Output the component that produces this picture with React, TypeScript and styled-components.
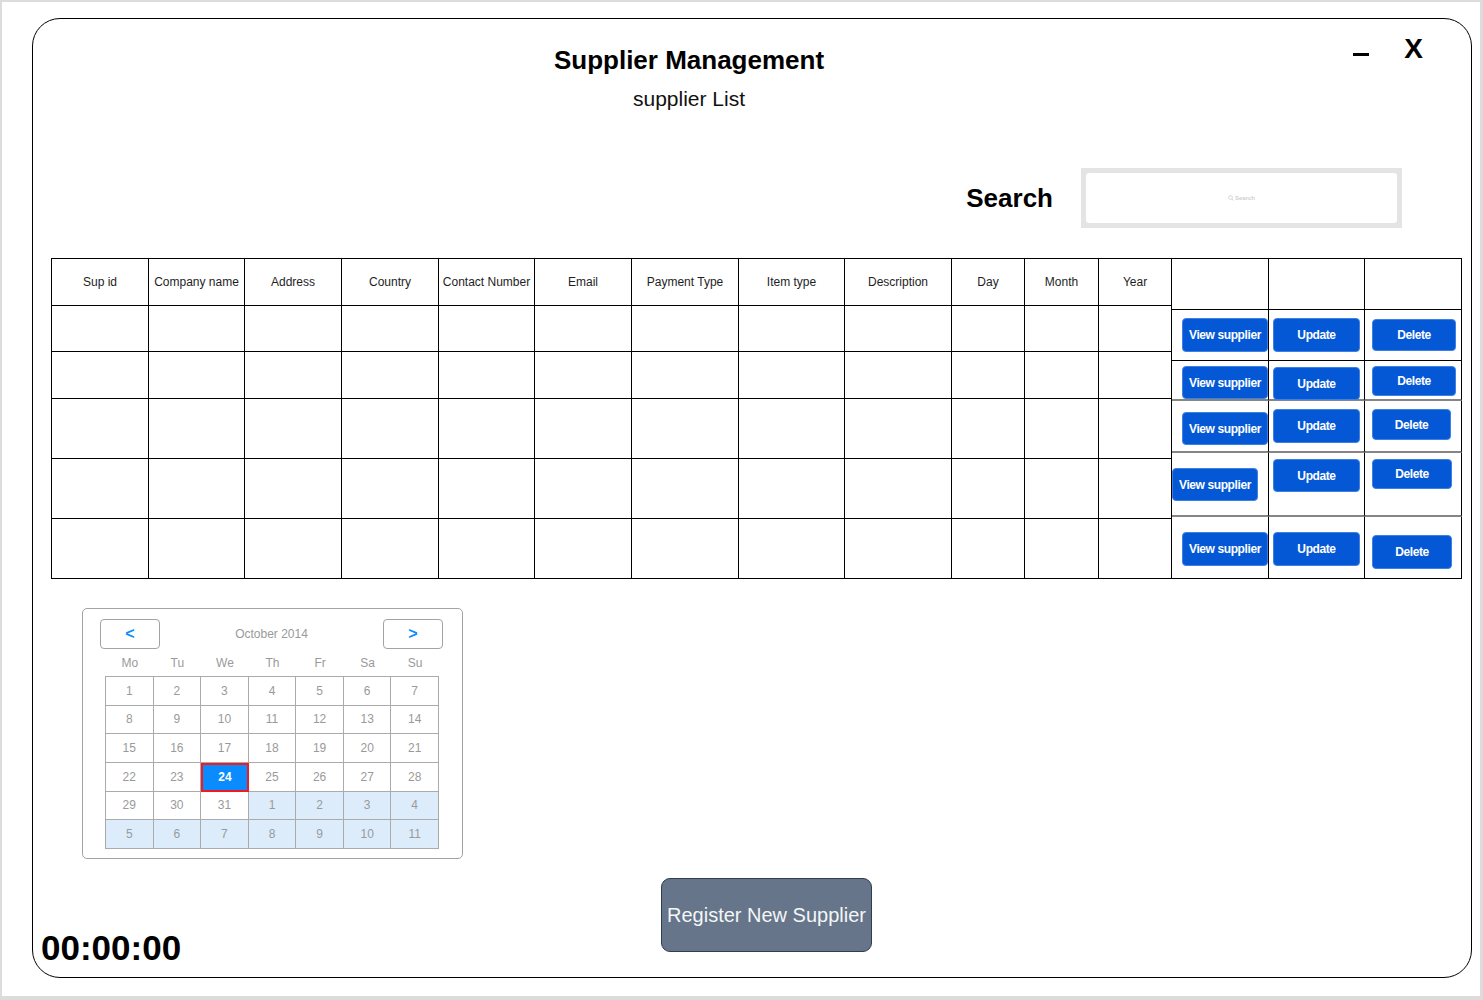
import React from 'react';
import styled, { createGlobalStyle, css } from 'styled-components';

const GlobalStyle = createGlobalStyle`
  html, body { margin: 0; padding: 0; background: #fff; }
  body { font-family: "Liberation Sans", Arial, sans-serif; }
  * { box-sizing: border-box; }
`;

const Page = styled.div`
  width: 1483px;
  height: 1000px;
  border-style: solid;
  border-color: #dcdcdc;
  border-width: 2px 3px 4px 2px;
  padding: 16px 0 0 30px;
  background: #fff;
`;

const Frame = styled.div`
  width: 1440px;
  height: 960px;
  border: 1px solid #000;
  border-radius: 28px;
  display: flex;
  flex-direction: column;
`;

const Header = styled.header`
  display: grid;
  grid-template-columns: 456px 400px 1fr;
  align-items: start;
`;

const TitleBlock = styled.div`
  grid-column: 2;
  display: flex;
  flex-direction: column;
  align-items: center;
  padding-top: 26px;
`;

const Title = styled.h1`
  margin: 0;
  font-size: 26px;
  font-weight: 700;
  line-height: normal;
  color: #000;
`;

const Subtitle = styled.p`
  margin: 11px 0 0;
  font-size: 21px;
  line-height: normal;
  color: #111;
`;

const WindowControls = styled.div`
  grid-column: 3;
  justify-self: end;
  display: flex;
  align-items: flex-start;
  gap: 35px;
  padding: 16px 48px 0 0;
`;

const MinimizeIcon = styled.span`
  display: block;
  width: 16px;
  height: 3px;
  margin-top: 18px;
  background: #000;
`;

const CloseGlyph = styled.span`
  font-size: 28px;
  font-weight: 700;
  line-height: 1;
  color: #000;
`;

const SearchRow = styled.div`
  display: flex;
  justify-content: flex-end;
  align-items: center;
  gap: 28px;
  margin-top: 57px;
  padding-right: 69px;
`;

const SearchLabel = styled.span`
  font-size: 26px;
  font-weight: 700;
  color: #000;
`;

const SearchField = styled.div`
  width: 321px;
  height: 60px;
  padding: 5px;
  background: #e4e4e4;
`;

const SearchInner = styled.div`
  height: 100%;
  border-radius: 3px;
  background: #fff;
  display: flex;
  align-items: center;
  justify-content: center;
  gap: 1px;
  font-size: 6px;
  font-weight: 700;
  color: #cfcfcf;
`;

const TableArea = styled.div`
  display: flex;
  margin: 30px 0 0 18px;
`;

const DataGrid = styled.div`
  display: grid;
  grid-template-columns: 97px 96px 97px 97px 96px 97px 107px 106px 107px 73px 74px 73px;
  grid-template-rows: 47px 46px 47px 60px 60px 60px;
  border-top: 1px solid #000;
  border-left: 1px solid #000;
`;

const HeadCell = styled.div`
  display: flex;
  align-items: center;
  justify-content: center;
  border-right: 1px solid #000;
  border-bottom: 1px solid #000;
  font-size: 12px;
  color: #1e1e1e;
  white-space: nowrap;
`;

const BodyCell = styled.div`
  border-right: 1px solid #000;
  border-bottom: 1px solid #000;
`;

const ActionGrid = styled.div`
  display: grid;
  grid-template-columns: 97px 96px 97px;
  grid-template-rows: 51px 51px 40px 52px 64px 62px;
  border-top: 1px solid #000;
`;

const ActionCell = styled.div<{ $gray?: boolean }>`
  display: flex;
  align-items: flex-start;
  border-right: 1px solid #000;
  border-bottom: ${p => (p.$gray ? '2px solid #858585' : '1px solid #000')};
`;

const ActionButton = styled.button<{ $mt: number; $ml: number; $w: number; $h: number }>`
  flex: none;
  margin-top: ${p => p.$mt}px;
  margin-left: ${p => p.$ml}px;
  width: ${p => p.$w}px;
  height: ${p => p.$h}px;
  padding: 0;
  border: 1px solid #3f80e3;
  border-radius: 4px;
  background: #0458d6;
  color: #fff;
  font-family: "Liberation Sans", Arial, sans-serif;
  font-size: 12px;
  font-weight: 700;
  letter-spacing: -0.4px;
  white-space: nowrap;
`;

const CalendarCard = styled.div`
  width: 381px;
  height: 251px;
  margin: 29px 0 0 49px;
  padding: 10px 19px 0 17px;
  border: 1px solid #a3a3a3;
  border-radius: 5px;
  display: flex;
  flex-direction: column;
`;

const CalNav = styled.div`
  display: flex;
  align-items: center;
  height: 30px;
`;

const NavButton = styled.button`
  width: 60px;
  height: 30px;
  padding: 0;
  border: 1px solid #a3a3a3;
  border-radius: 4px;
  background: #fff;
  color: #0a8cff;
  font-family: "Liberation Sans", Arial, sans-serif;
  font-size: 16px;
  font-weight: 700;
`;

const MonthLabel = styled.span`
  flex: 1;
  text-align: center;
  font-size: 12px;
  color: #9a9a9a;
`;

const WeekRow = styled.div`
  display: grid;
  grid-template-columns: repeat(7, 1fr);
  width: 334px;
  height: 20px;
  margin: 4px 0 0 5px;
  padding-left: 1px;
  align-items: center;
`;

const WeekDay = styled.span`
  text-align: center;
  font-size: 12px;
  color: #9a9a9a;
`;

const DayGrid = styled.div`
  display: grid;
  grid-template-columns: repeat(7, 1fr);
  grid-template-rows: repeat(6, 1fr);
  width: 334px;
  height: 173px;
  margin: 3px 0 0 5px;
  border-top: 1px solid #ababab;
  border-left: 1px solid #ababab;
`;

const DayCell = styled.div<{ $muted?: boolean; $selected?: boolean }>`
  display: flex;
  align-items: center;
  justify-content: center;
  border-right: 1px solid #ababab;
  border-bottom: 1px solid #ababab;
  font-size: 12px;
  color: #9a9a9a;
  background: ${p => (p.$muted ? '#dcecfb' : '#fff')};
  ${p =>
    p.$selected &&
    css`
      border: 2px solid #f2191f;
      background: #0a8cff;
      color: #fff;
      font-weight: 700;
    `}
`;

const BottomRow = styled.div`
  display: grid;
  grid-template-columns: 628px auto;
  align-items: start;
  margin-top: 19px;
`;

const Timer = styled.div`
  margin-top: 50px;
  padding-left: 8px;
  font-size: 35px;
  font-weight: 700;
  line-height: normal;
  color: #000;
`;

const RegisterButton = styled.button`
  width: 211px;
  height: 74px;
  padding: 0;
  border: 1px solid #2e3d50;
  border-radius: 9px;
  background: #667589;
  color: #f4f6f8;
  font-family: "Liberation Sans", Arial, sans-serif;
  font-size: 20px;
  white-space: nowrap;
`;

const headers = [
  'Sup id',
  'Company name',
  'Address',
  'Country',
  'Contact Number',
  'Email',
  'Payment Type',
  'Item type',
  'Description',
  'Day',
  'Month',
  'Year',
];

type Spot = { mt: number; ml: number; w: number; h: number };
type ActionRow = { gray: boolean; view: Spot; update: Spot; del: Spot };

const actionRows: ActionRow[] = [
  {
    gray: false,
    view: { mt: 8, ml: 10, w: 86, h: 34 },
    update: { mt: 8, ml: 4, w: 87, h: 34 },
    del: { mt: 9, ml: 7, w: 84, h: 32 },
  },
  {
    gray: true,
    view: { mt: 5, ml: 10, w: 86, h: 33 },
    update: { mt: 6, ml: 4, w: 87, h: 33 },
    del: { mt: 5, ml: 7, w: 84, h: 30 },
  },
  {
    gray: true,
    view: { mt: 11, ml: 10, w: 86, h: 33 },
    update: { mt: 8, ml: 4, w: 87, h: 34 },
    del: { mt: 8, ml: 7, w: 79, h: 31 },
  },
  {
    gray: true,
    view: { mt: 15, ml: 0, w: 86, h: 33 },
    update: { mt: 6, ml: 4, w: 87, h: 33 },
    del: { mt: 6, ml: 7, w: 80, h: 30 },
  },
  {
    gray: false,
    view: { mt: 15, ml: 10, w: 86, h: 34 },
    update: { mt: 15, ml: 4, w: 87, h: 34 },
    del: { mt: 18, ml: 7, w: 80, h: 34 },
  },
];

const weekDays = ['Mo', 'Tu', 'We', 'Th', 'Fr', 'Sa', 'Su'];

type Day = { n: number; muted?: boolean; selected?: boolean };
const days: Day[] = [];
for (let i = 1; i <= 31; i++) days.push({ n: i, selected: i === 24 });
for (let i = 1; i <= 11; i++) days.push({ n: i, muted: true });

const SearchIcon = () => (
  <svg width="6" height="6" viewBox="0 0 10 10" fill="none" stroke="#cfcfcf" strokeWidth="1.4">
    <circle cx="4.2" cy="4.2" r="3.2" />
    <line x1="6.6" y1="6.6" x2="9.4" y2="9.4" />
  </svg>
);

export default function App() {
  return (
    <>
      <GlobalStyle />
      <Page>
        <Frame>
          <Header>
            <TitleBlock>
              <Title>Supplier Management</Title>
              <Subtitle>supplier List</Subtitle>
            </TitleBlock>
            <WindowControls>
              <MinimizeIcon aria-label="minimize" />
              <CloseGlyph>X</CloseGlyph>
            </WindowControls>
          </Header>

          <SearchRow>
            <SearchLabel>Search</SearchLabel>
            <SearchField>
              <SearchInner>
                <SearchIcon />
                <span>Search</span>
              </SearchInner>
            </SearchField>
          </SearchRow>

          <TableArea>
            <DataGrid>
              {headers.map(h => (
                <HeadCell key={h}>{h}</HeadCell>
              ))}
              {Array.from({ length: 5 * headers.length }).map((_, i) => (
                <BodyCell key={i} />
              ))}
            </DataGrid>
            <ActionGrid>
              <ActionCell />
              <ActionCell />
              <ActionCell />
              {actionRows.map((r, i) => (
                <React.Fragment key={i}>
                  <ActionCell $gray={r.gray}>
                    <ActionButton $mt={r.view.mt} $ml={r.view.ml} $w={r.view.w} $h={r.view.h}>
                      View supplier
                    </ActionButton>
                  </ActionCell>
                  <ActionCell $gray={r.gray}>
                    <ActionButton $mt={r.update.mt} $ml={r.update.ml} $w={r.update.w} $h={r.update.h}>
                      Update
                    </ActionButton>
                  </ActionCell>
                  <ActionCell $gray={r.gray}>
                    <ActionButton $mt={r.del.mt} $ml={r.del.ml} $w={r.del.w} $h={r.del.h}>
                      Delete
                    </ActionButton>
                  </ActionCell>
                </React.Fragment>
              ))}
            </ActionGrid>
          </TableArea>

          <CalendarCard>
            <CalNav>
              <NavButton>&lt;</NavButton>
              <MonthLabel>October 2014</MonthLabel>
              <NavButton>&gt;</NavButton>
            </CalNav>
            <WeekRow>
              {weekDays.map(d => (
                <WeekDay key={d}>{d}</WeekDay>
              ))}
            </WeekRow>
            <DayGrid>
              {days.map((d, i) => (
                <DayCell key={i} $muted={d.muted} $selected={d.selected}>
                  {d.n}
                </DayCell>
              ))}
            </DayGrid>
          </CalendarCard>

          <BottomRow>
            <Timer>00:00:00</Timer>
            <RegisterButton>Register New Supplier</RegisterButton>
          </BottomRow>
        </Frame>
      </Page>
    </>
  );
}
